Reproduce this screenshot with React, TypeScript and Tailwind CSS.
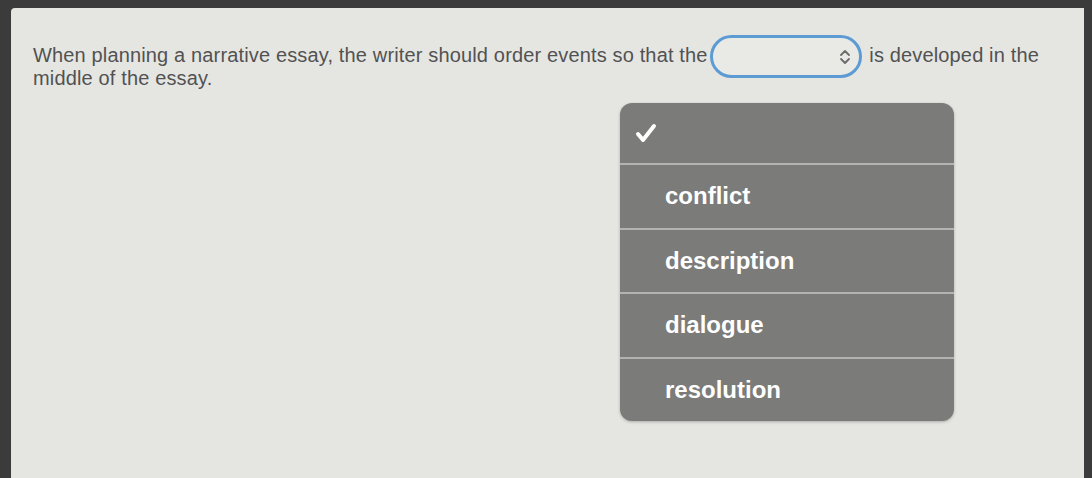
import React from 'react';

const options = ['conflict', 'description', 'dialogue', 'resolution'];

const App: React.FC = () => {
  return (
    <div className="relative w-[1092px] h-[478px] overflow-hidden bg-[#3b3b3b] font-['Liberation_Sans',Arial,sans-serif]">
      {/* screen area */}
      <div className="absolute left-[11px] top-[8px] right-[8px] bottom-0 bg-[#e5e6e2] rounded-tl-sm">
        <p className="ml-[22px] w-[1020px] pt-[36px] text-[20px] leading-[22px] text-[#525252] tracking-[0.15px]">
          When planning a narrative essay, the writer should order events so that the
          <span className="inline-flex align-middle items-center justify-end -my-[11px] mx-[2px] w-[152px] h-[43px] rounded-full border-[3px] border-[#5c9bd3] bg-[#e9eae6] pr-[8px]">
            <svg width="12" height="16" viewBox="0 0 12 16" fill="none" stroke="#6b6b6b" strokeWidth="1.8" strokeLinecap="round" strokeLinejoin="round">
              <path d="M2 6l4-4 4 4" />
              <path d="M2 10l4 4 4-4" />
            </svg>
          </span>
          {' '}is developed in the middle of the essay.
        </p>
      </div>

      {/* dropdown menu */}
      <div className="absolute left-[620px] top-[103px] w-[334px] h-[318px] rounded-[12px] bg-[#7b7b79] overflow-hidden flex flex-col shadow-[0_1px_3px_rgba(0,0,0,0.25)]">
        <div className="h-[62px] flex items-center pl-[13px] border-b-2 border-[#b3b3b0]">
          <svg width="26" height="22" viewBox="0 0 26 22" fill="none" stroke="#ffffff" strokeWidth="4" strokeLinecap="round" strokeLinejoin="round">
            <path d="M5 12l5 6L21 4" />
          </svg>
        </div>
        {options.map((o, i) => (
          <div
            key={o}
            className={`flex-1 flex items-center pl-[45px] text-white font-bold text-[24px] ${i < options.length - 1 ? 'border-b-2 border-[#b3b3b0]' : ''}`}
          >
            {o}
          </div>
        ))}
      </div>
    </div>
  );
};

export default App;
